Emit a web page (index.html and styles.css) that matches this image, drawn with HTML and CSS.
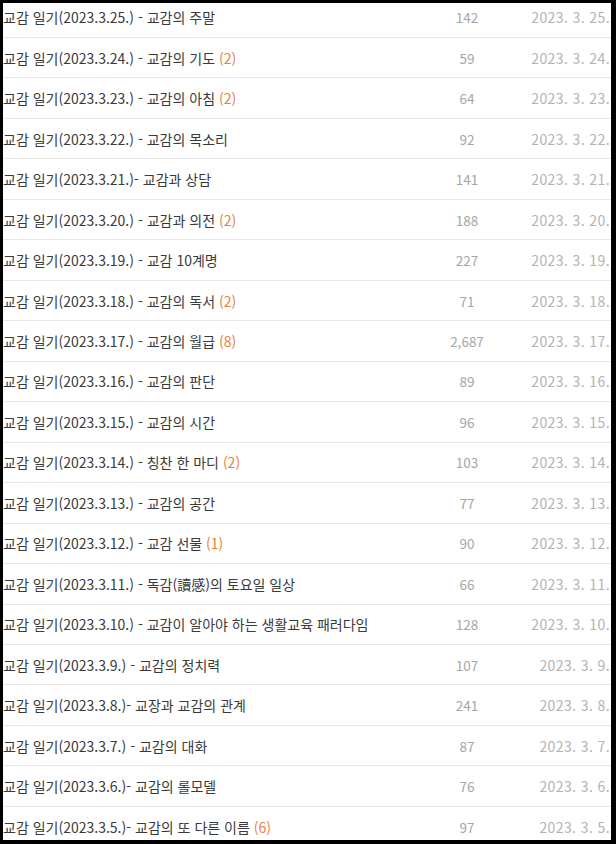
FILE: index.html
```html
<!DOCTYPE html>
<html lang="ko">
<head>
  <meta charset="UTF-8">
  <meta name="viewport" content="width=device-width, initial-scale=1.0">
  <title>교감 일기</title>
  <link rel="stylesheet" href="styles.css">
</head>
<body>
  <div class="frame">
    <ul class="post-list">
      <li class="post"><span class="title">교감 일기(2023.3.25.) - 교감의 주말</span><span class="views">142</span><span class="date">2023. 3. 25.</span></li>
      <li class="post"><span class="title">교감 일기(2023.3.24.) - 교감의 기도 <em class="cmt">(2)</em></span><span class="views">59</span><span class="date">2023. 3. 24.</span></li>
      <li class="post"><span class="title">교감 일기(2023.3.23.) - 교감의 아침 <em class="cmt">(2)</em></span><span class="views">64</span><span class="date">2023. 3. 23.</span></li>
      <li class="post"><span class="title">교감 일기(2023.3.22.) - 교감의 목소리</span><span class="views">92</span><span class="date">2023. 3. 22.</span></li>
      <li class="post"><span class="title">교감 일기(2023.3.21.)- 교감과 상담</span><span class="views">141</span><span class="date">2023. 3. 21.</span></li>
      <li class="post"><span class="title">교감 일기(2023.3.20.) - 교감과 의전 <em class="cmt">(2)</em></span><span class="views">188</span><span class="date">2023. 3. 20.</span></li>
      <li class="post"><span class="title">교감 일기(2023.3.19.) - 교감 10계명</span><span class="views">227</span><span class="date">2023. 3. 19.</span></li>
      <li class="post"><span class="title">교감 일기(2023.3.18.) - 교감의 독서 <em class="cmt">(2)</em></span><span class="views">71</span><span class="date">2023. 3. 18.</span></li>
      <li class="post"><span class="title">교감 일기(2023.3.17.) - 교감의 월급 <em class="cmt">(8)</em></span><span class="views">2,687</span><span class="date">2023. 3. 17.</span></li>
      <li class="post"><span class="title">교감 일기(2023.3.16.) - 교감의 판단</span><span class="views">89</span><span class="date">2023. 3. 16.</span></li>
      <li class="post"><span class="title">교감 일기(2023.3.15.) - 교감의 시간</span><span class="views">96</span><span class="date">2023. 3. 15.</span></li>
      <li class="post"><span class="title">교감 일기(2023.3.14.) - 칭찬 한 마디 <em class="cmt">(2)</em></span><span class="views">103</span><span class="date">2023. 3. 14.</span></li>
      <li class="post"><span class="title">교감 일기(2023.3.13.) - 교감의 공간</span><span class="views">77</span><span class="date">2023. 3. 13.</span></li>
      <li class="post"><span class="title">교감 일기(2023.3.12.) - 교감 선물 <em class="cmt">(1)</em></span><span class="views">90</span><span class="date">2023. 3. 12.</span></li>
      <li class="post"><span class="title">교감 일기(2023.3.11.) - 독감(讀感)의 토요일 일상</span><span class="views">66</span><span class="date">2023. 3. 11.</span></li>
      <li class="post"><span class="title">교감 일기(2023.3.10.) - 교감이 알아야 하는 생활교육 패러다임</span><span class="views">128</span><span class="date">2023. 3. 10.</span></li>
      <li class="post"><span class="title">교감 일기(2023.3.9.) - 교감의 정치력</span><span class="views">107</span><span class="date">2023. 3. 9.</span></li>
      <li class="post"><span class="title">교감 일기(2023.3.8.)- 교장과 교감의 관계</span><span class="views">241</span><span class="date">2023. 3. 8.</span></li>
      <li class="post"><span class="title">교감 일기(2023.3.7.) - 교감의 대화</span><span class="views">87</span><span class="date">2023. 3. 7.</span></li>
      <li class="post"><span class="title">교감 일기(2023.3.6.)- 교감의 롤모델</span><span class="views">76</span><span class="date">2023. 3. 6.</span></li>
      <li class="post"><span class="title">교감 일기(2023.3.5.)- 교감의 또 다른 이름 <em class="cmt">(6)</em></span><span class="views">97</span><span class="date">2023. 3. 5.</span></li>
    </ul>
  </div>
</body>
</html>
```

FILE: styles.css
```css
* {
  margin: 0;
  padding: 0;
  box-sizing: border-box;
}

html,
body {
  height: 100%;
}

body {
  background: #000;
  padding: 3px 5px 4px 3px;
  font-family: "Noto Sans CJK KR", "Noto Sans", sans-serif;
}

.frame {
  height: 100%;
  background: #fff;
  overflow: hidden;
}

.post-list {
  list-style: none;
  margin-top: -5.5px;
}

.post {
  display: grid;
  grid-template-columns: 1fr 60px 114px;
  align-items: center;
  height: 40.47px;
  border-bottom: 1px solid #e6e6e6;
  white-space: nowrap;
}

.title {
  font-size: 14px;
  color: #3a3a3a;
}

.cmt {
  font-style: normal;
  color: #e8823e;
}

.views {
  text-align: center;
  font-size: 13.5px;
  color: #a6a6a6;
}

.date {
  text-align: right;
  padding-right: 1px;
  font-size: 14px;
  letter-spacing: 0.4px;
  color: #b3b3b3;
}
```
